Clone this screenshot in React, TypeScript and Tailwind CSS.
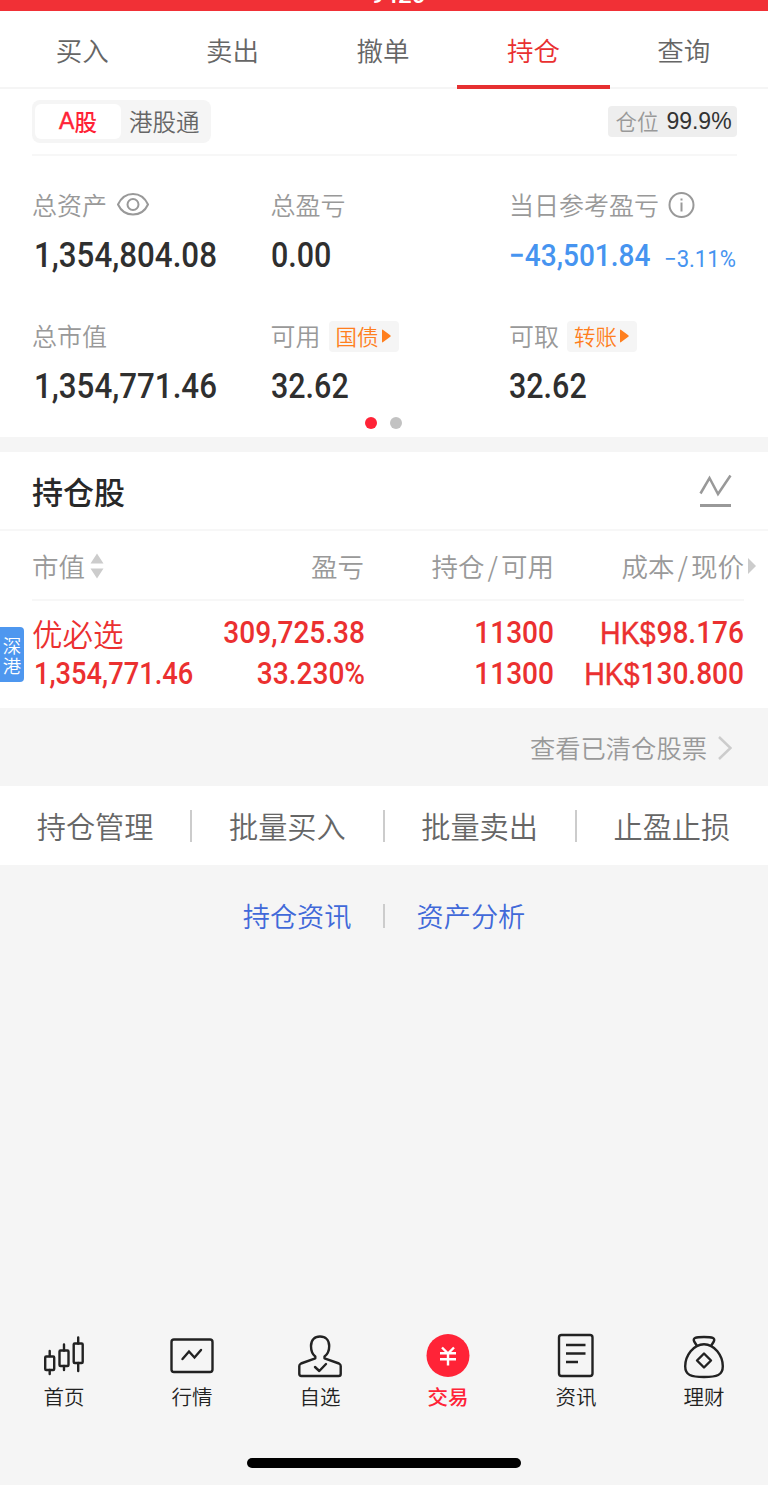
import type { ReactNode } from 'react';

const tabs = ['买入', '卖出', '撤单', '持仓', '查询'];
const actions = ['持仓管理', '批量买入', '批量卖出', '止盈止损'];

function Amount({ children, long }: { children: ReactNode; long?: boolean }) {
  return (
    <div className="h-[50px] pt-px leading-[50px]">
      <span className={`inline-block origin-left font-[Roboto] text-[35px] font-medium text-[#2f2f2f] ${long ? 'ml-0.5 scale-x-[0.895]' : 'scale-x-[0.87]'}`}>{children}</span>
    </div>
  );
}

function Label({ children }: { children: ReactNode }) {
  return <div className="flex h-[50px] items-center text-[25px] whitespace-nowrap text-[#999]">{children}</div>;
}

function Chip({ children }: { children: ReactNode }) {
  return (
    <span className="ml-2 flex h-[31px] w-[70px] items-center rounded bg-[#f5f5f5] pl-[7px] text-[21.5px] text-[#ff7f1e]">
      {children}
      <svg className="ml-[3px] shrink-0" width="9" height="14" viewBox="0 0 9 14" fill="currentColor"><path d="M0 1.500v11q0 1.500 1.200.500L8.300 7.800q.8-.8 0-1.600L1.200 1Q0 0 0 1.500Z" /></svg>
    </span>
  );
}

function Cell({ children }: { children: ReactNode }) {
  return <span className="flex h-[41px] origin-right scale-x-[0.905] items-center justify-end font-[Roboto] text-[31px] font-medium whitespace-nowrap">{children}</span>;
}

function Currency() {
  return <span className="mr-px font-['Liberation_Sans'] text-[31.500px] font-normal [-webkit-text-stroke:0.4px]">HK$</span>;
}

const navItems: { label: string; active?: boolean; icon: ReactNode }[] = [
  {
    label: '首页',
    icon: (
      <g fill="none" stroke="#222" strokeWidth="2.4" strokeLinecap="round">
        <rect x="3.200" y="24.500" width="9" height="13.500" rx="1" /><path d="M7.700 19V24M7.700 38v4" />
        <rect x="17.500" y="18.500" width="9" height="15.500" rx="1" /><path d="M22 12.500v6M22 34v4" />
        <rect x="31.700" y="11.500" width="9" height="19.500" rx="1" /><path d="M36.200 5.500v6M36.200 31v8" />
      </g>
    ),
  },
  {
    label: '行情',
    icon: (
      <g fill="none" stroke="#222" strokeWidth="2.400" strokeLinecap="round">
        <rect x="1.500" y="7.500" width="41" height="32.500" rx="2.500" /><path d="M12.500 27l6.500-7.500 5.500 6 6.500-7.500" />
      </g>
    ),
  },
  {
    label: '自选',
    icon: (
      <g fill="none" stroke="#222" strokeWidth="2.400" strokeLinecap="round" strokeLinejoin="round">
        <path d="M17.300 24.500C14 22 13 18.500 13 14c0-6 3.500-9.500 9-9.500s9.200 3.500 9.200 9.500c0 4.500-1.200 8-4.700 10.500v1.800l14.500 5.200q1.700.700 1.700 2.500v8q0 2-2 2H3.300q-2 0-2-2v-8q0-1.800 1.700-2.500l14.300-5.200Z" />
        <path d="M17 35l4.300 4 6.700-7" />
      </g>
    ),
  },
  {
    label: '交易',
    active: true,
    icon: (
      <g fill="none" stroke="#fff" strokeWidth="2.400">
        <circle cx="22" cy="23.500" r="21.500" fill="#ff2337" stroke="none" />
        <path d="M16 15.500l6 6 6-6M22 21v12.500M14 21.200h16M14 27.200h16" />
      </g>
    ),
  },
  {
    label: '资讯',
    icon: (
      <g fill="none" stroke="#222" strokeWidth="2.400">
        <rect x="5" y="3" width="33.500" height="41" rx="2.500" /><path d="M12 13h19.500M12 21.500h19.500M12 30h12" />
      </g>
    ),
  },
  {
    label: '理财',
    icon: (
      <g fill="none" stroke="#222" strokeWidth="2.400" strokeLinejoin="round">
        <path d="M15 14l-2.800-4.500C10.500 6 13.500 5 22 5s11.500 1 9.800 4.500L29 14" />
        <path d="M22 12.300c-10.500 0-18.800 11.500-18.800 22 0 9 5.800 10.700 18.800 10.700s18.800-1.700 18.800-10.700c0-10.500-8.300-22-18.800-22Z" />
        <path d="M22 21.500l7 7-7 7-7-7Z" />
      </g>
    ),
  },
];

export default function App() {
  return (
    <div className="flex h-[1485px] w-[768px] flex-col overflow-hidden bg-[#f5f5f5] font-['Noto_Sans_CJK_SC',sans-serif] font-[350] text-[#666]">
      <header className="flex h-[11px] shrink-0 items-end justify-center overflow-hidden bg-[#f13036]">
        <span className="mb-[5px] ml-[28px] font-[Roboto] text-[24px] leading-[22px] font-medium text-white">9420</span>
      </header>

      <nav className="flex h-[78px] shrink-0 border-b-2 border-[#f5f5f5] bg-white pr-[9px] pl-[7px]">
        {tabs.map((t) => (
          <div key={t} className={`relative flex flex-1 items-center justify-center pt-0.5 text-[26.500px] ${t === '持仓' ? 'text-[#e93030]' : ''}`}>
            {t}
            {t === '持仓' && <span className="absolute -bottom-0.5 h-1 w-[153px] bg-[#e63031]" />}
          </div>
        ))}
      </nav>

      <section className="h-[348px] shrink-0 bg-white pr-[31px] pl-8">
        <div className="flex h-[67px] items-center justify-between border-b-2 border-[#f7f7f7]">
          <div className="flex h-[43px] w-[179px] items-center rounded-lg bg-[#f5f5f5] p-[3px] text-[23.500px]">
            <span className="flex h-[35px] w-[86px] items-center justify-center rounded-md bg-white text-[22.500px] font-medium text-[#ff2337]"><span className="font-['Liberation_Sans'] text-[23px] [-webkit-text-stroke:0.5px]">A</span>股</span>
            <span className="ml-2">港股通</span>
          </div>
          <div className="flex h-[31px] w-[129px] items-center justify-center gap-2 rounded bg-[#eee] pl-0.5 text-[21.500px] text-[#999]">
            仓位<span className="font-['Liberation_Sans'] text-[23px] text-[#333]">99.9%</span>
          </div>
        </div>
        <div className="grid grid-cols-[238.500px_238.500px_1fr] pt-6">
          <div className="h-[131px]">
            <Label>
              总资产
              <svg className="ml-[9px]" width="34" height="26" viewBox="0 0 34 26" fill="none" stroke="#999" strokeWidth="2"><path d="M2 12.500C5 6 10 2 17 2s12 4 15 10.500C29 19 24 22.500 17 22.500S5 19 2 12.500Z" /><circle cx="17" cy="12.500" r="5.500" /></svg>
            </Label>
            <Amount long>1,354,804.08</Amount>
          </div>
          <div><Label>总盈亏</Label><Amount>0.00</Amount></div>
          <div>
            <Label>
              当日参考盈亏
              <svg className="ml-2 shrink-0" width="28" height="28" viewBox="0 0 28 28" fill="none" stroke="#999" strokeWidth="2"><circle cx="14.500" cy="14" r="12" /><path d="M14.500 11.500V20.500M14.500 7.500v2" /></svg>
            </Label>
            <div className="flex h-[50px] items-baseline pt-px font-[Roboto] leading-[50px] whitespace-nowrap text-[#4694f0]">
              <span className="w-[155px] origin-left scale-x-[0.905] text-[31px] font-medium">−43,501.84</span>
              <span className="relative top-px w-[70px] origin-left scale-x-[0.94] text-[23.500px] font-normal">−3.11%</span>
            </div>
          </div>
          <div><Label>总市值</Label><Amount long>1,354,771.46</Amount></div>
          <div><Label>可用<Chip>国债</Chip></Label><Amount>32.62</Amount></div>
          <div><Label>可取<Chip>转账</Chip></Label><Amount>32.62</Amount></div>
        </div>
        <div className="flex justify-center gap-[13px] pt-[6px] pr-0.5">
          <i className="size-3 rounded-full bg-[#ff2337]" />
          <i className="size-3 rounded-full bg-[#c2c2c2]" />
        </div>
      </section>

      <section className="mt-[15px] h-[256px] shrink-0 bg-white">
        <div className="flex h-[79px] items-center justify-between border-b-2 border-[#f7f7f7] pr-[36px] pl-8">
          <h2 className="pt-px text-[31px] font-medium text-[#282828]">持仓股</h2>
          <svg width="33" height="34" viewBox="0 0 33 34" fill="none" stroke="#999" strokeWidth="2.500"><path d="M1.500 19.500L10.500 4l8.500 16L31.500 1.500" /><path d="M1 31.500h31" strokeWidth="3" /></svg>
        </div>
        <div className="mr-6 ml-8 flex h-[70px] items-center border-b-2 border-[#f7f7f7] pt-0.5 text-[26.500px] text-[#999]">
          <span className="flex w-[142px] items-center">
            市值
            <svg className="ml-[5px]" width="14" height="26" viewBox="0 0 14 26" fill="#ccc"><path d="M7 .5L13.500 10.500H.5ZM7 25.500L.5 15.500h13Z" /></svg>
          </span>
          <span className="w-[190px] text-right">盈亏</span>
          <span className="w-[190px] text-right">持仓<span className="mx-[3px]">/</span>可用</span>
          <span className="w-[190px] shrink-0 text-right">成本<span className="mx-[3px]">/</span>现价</span>
          <svg className="-mr-3 ml-1 shrink-0" width="8" height="16" viewBox="0 0 8 16" fill="#ccc"><path d="M0 0l8 8-8 8Z" /></svg>
        </div>
        <div className="flex h-[107px] items-start">
          <div className="mt-[26px] flex h-[55px] w-6 shrink-0 flex-col items-center justify-center rounded-r bg-[#4e97ef] text-[18.500px] leading-5 text-white">
            <span>深</span><span>港</span>
          </div>
          <div className="ml-2 flex w-[712px] pt-3 text-[#eb3030]">
            <div className="w-[165px]">
              <div className="flex h-[41px] items-center text-[30.500px]">优必选</div>
              <div className="ml-0.5 flex h-[41px] origin-left scale-x-[0.88] items-center font-[Roboto] text-[31px] font-medium">1,354,771.46</div>
            </div>
            <div className="w-[168px]"><Cell>309,725.38</Cell><Cell>33.230%</Cell></div>
            <div className="w-[189px]"><Cell>11300</Cell><Cell>11300</Cell></div>
            <div className="w-[190px]"><Cell><Currency />98.176</Cell><Cell><Currency />130.800</Cell></div>
          </div>
        </div>
      </section>

      <div className="flex h-[78px] shrink-0 items-center justify-end pt-px pr-[36px] text-[25.300px] text-[#999]">
        查看已清仓股票
        <svg className="ml-[11px]" width="14" height="24" viewBox="0 0 14 24" fill="none" stroke="#ccc" strokeWidth="2.500"><path d="M1 1l11.500 11L1 23" /></svg>
      </div>

      <div className="flex h-[78.500px] shrink-0 items-center bg-white pt-px pr-px text-[29.200px]">
        {actions.map((a, i) => (
          <div key={a} className={`flex h-8 flex-1 items-center justify-center ${i < 3 ? 'border-r-2 border-[#ccc]' : ''}`}>{a}</div>
        ))}
      </div>

      <div className="flex h-[102px] shrink-0 items-center justify-center text-[27.200px] text-[#4169d9]">
        持仓资讯<i className="mr-8 ml-[31px] h-6 w-0.5 bg-[#ccc]" />资产分析
      </div>

      <footer className="mt-auto h-[153px] shrink-0">
        <div className="flex">
          {navItems.map((n) => (
            <div key={n.label} className={`flex flex-1 flex-col items-center text-[20.500px] ${n.active ? 'font-medium text-[#ff2337]' : 'text-[#222]'}`}>
              <svg width="44" height="48" viewBox="0 0 44 48">{n.icon}</svg>
              <span className="mt-px leading-[30px]">{n.label}</span>
            </div>
          ))}
        </div>
        <div className="mx-auto mt-[47px] h-[10px] w-[274px] rounded-full bg-black" />
      </footer>
    </div>
  );
}
